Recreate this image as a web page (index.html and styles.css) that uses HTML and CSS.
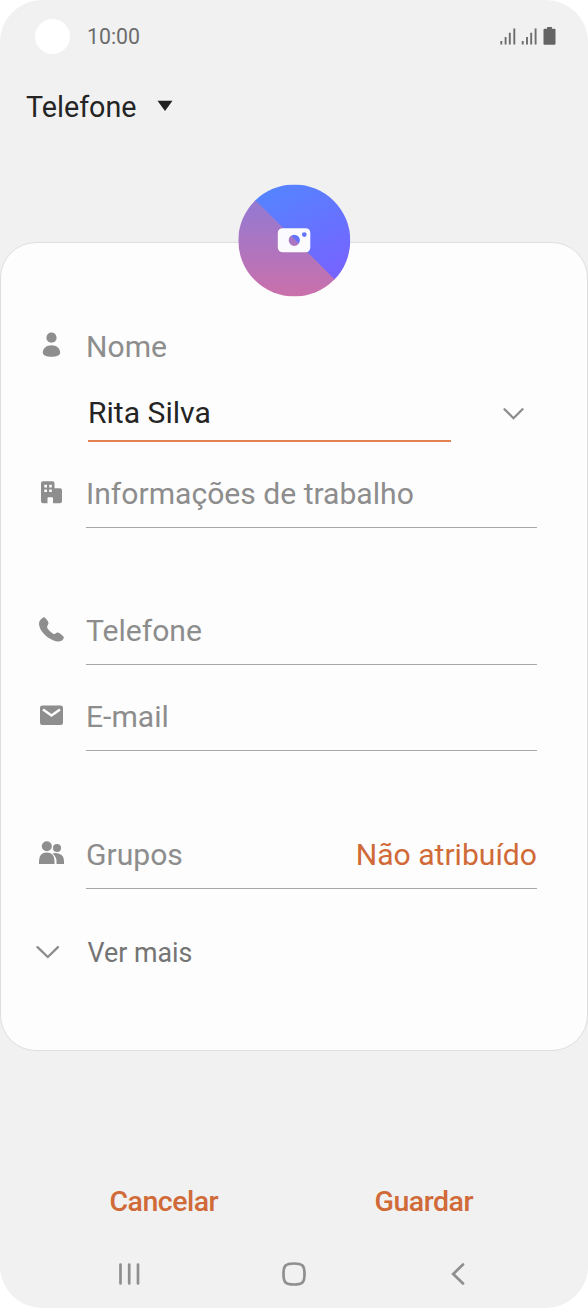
FILE: index.html
```html
<!DOCTYPE html>
<html lang="pt">
<head>
<meta charset="utf-8">
<title>Novo contacto</title>
<link rel="stylesheet" href="styles.css">
</head>
<body>
<main class="phone">
  <header class="status">
    <span class="lens"></span>
    <span class="clock">10:00</span>
    <svg class="signals" width="58" height="20" viewBox="0 0 58 20">
      <path d="M2.300 14v3.500M6.600 10v7.500M10.800 5.700v11.800M15.300 1.500v16M23.700 14v3.500M28 10v7.500M32.200 5.700v11.800M36.600 1.500v16" fill="none" stroke="#6d6d6d" stroke-width="1.900"/>
      <path d="M48.100 0h4.800v1.800h2.600q1 0 1 1v14q0 1-1 1h-10q-1 0-1-1v-14q0-1 1-1h2.600z" fill="#646464"/>
    </svg>
  </header>
  <div class="account">
    <span class="account-name">Telefone</span>
    <svg width="16" height="12" viewBox="0 0 16 12"><path d="M.5.700h15L8 11z" fill="#222"/></svg>
  </div>
  <section class="card">
    <div class="avatar">
      <svg width="112" height="112" viewBox="0 0 112 112">
        <defs>
          <linearGradient id="blue" x1=".2" y1="0" x2=".75" y2="1"><stop offset="0" stop-color="#5286ff"/><stop offset="1" stop-color="#7a60ff"/></linearGradient>
          <linearGradient id="pink" x1="0" y1="0" x2="0" y2="1"><stop offset=".1" stop-color="#8f7ad6"/><stop offset="1" stop-color="#ca70aa"/></linearGradient>
          <clipPath id="disc"><circle cx="56" cy="56" r="56"/></clipPath>
        </defs>
        <g clip-path="url(#disc)">
          <path d="M0 0h112v112z" fill="url(#blue)"/>
          <path d="M0-1.500L113.500 112H0z" fill="url(#pink)"/>
        </g>
        <path fill-rule="evenodd" fill="#fbfbff" d="M45 43.800h22q5 0 5 5v14q0 5-5 5H45q-5.500 0-5.500-5v-14q0-5 5.500-5zM56 50.200a5.600 5.600 0 1 0 0 11.200a5.600 5.600 0 1 0 0-11.200zM66 47.700a2.400 2.400 0 1 0 0 4.800a2.400 2.400 0 1 0 0-4.800z"/>
      </svg>
    </div>
    <div class="row name-row">
      <svg class="icon" width="28" height="28" viewBox="0 0 28 28"><circle cx="14.500" cy="6.700" r="5.100"/><path d="M5.800 21.500C5.800 17 10 14.200 14.500 14.200s8.700 2.800 8.700 7.300c0 3-4 4.300-8.700 4.300s-8.700-1.300-8.700-4.300z"/></svg>
      <div class="field plain"><span class="label">Nome</span></div>
    </div>
    <div class="entry">
      <div class="input"><span class="value">Rita Silva</span></div>
      <svg class="chevron" width="24" height="16" viewBox="0 0 24 16"><path d="M3.500 3.200l9 9 9-9"/></svg>
    </div>
    <div class="row work">
      <svg class="icon" width="28" height="28" viewBox="0 0 28 28"><path fill-rule="evenodd" d="M6 2.300h9.500q2 0 2 2v5h5.500q2 0 2 2v11q0 2-2 2h-7v-5q0-1-1-1h-3.500q-1 0-1 1v5H6q-2 0-2-2v-18q0-2 2-2zM7.300 5.800v2.700H10V5.800zM12.200 5.800v2.700h2.600V5.800zM7.300 10.400v2.700H10v-2.700zM12.200 10.400v2.700h2.600v-2.700z"/></svg>
      <div class="field"><span class="label">Informações de trabalho</span></div>
    </div>
    <div class="row phone-row">
      <svg class="icon" width="28" height="28" viewBox="0 0 28 28"><path d="M5.400 2Q7.300.4 8.800 2.500L11 5.600q1.200 2-.3 3.700-1.300 1.300-.1 3.100 2 3.200 5.100 5.100 1.500 1.200 2.800 0 1.800-1.800 3.800-.4l3.700 2.800q1.700 1.500.2 3.400c-2 2.600-6 3-10.100 1C8 21 3 14.400 2.100 9.100 1.600 6 2.900 3.700 5.400 2z"/></svg>
      <div class="field"><span class="label">Telefone</span></div>
    </div>
    <div class="row mail-row">
      <svg class="icon" width="28" height="28" viewBox="0 0 28 28"><rect x="3" y="3.500" width="23" height="19.500" rx="2.200"/><path d="M6 7.500l8.500 6L23 7.500" fill="none" stroke="#fdfdfd" stroke-width="2.500"/></svg>
      <div class="field"><span class="label">E-mail</span></div>
    </div>
    <div class="row groups-row">
      <svg class="icon" width="28" height="28" viewBox="0 0 28 28"><circle cx="9.800" cy="7.300" r="5"/><circle cx="20" cy="9" r="4"/><path d="M2 25v-3q0-8.500 7.800-8.500t7.700 8.500V25zM15.500 14.500q3.200-1 6.500.2 5 1.500 5 7.300V25h-7.500v-3q0-4-4-7.500z"/></svg>
      <div class="field"><span class="label">Grupos</span><span class="assigned">Não atribuído</span></div>
    </div>
    <div class="more">
      <svg class="chevron" width="26" height="16" viewBox="0 0 26 16"><path d="M2.500 2.100L12.800 12 23 2.100"/></svg>
      <span class="more-label">Ver mais</span>
    </div>
  </section>
  <div class="actions"><span class="action">Cancelar</span><span class="action">Guardar</span></div>
  <nav class="nav">
    <svg width="24" height="24" viewBox="0 0 24 24"><path d="M3.500 2.500v19M12.200 2.500v19M21 2.500v19"/></svg>
    <svg class="home" width="26" height="26" viewBox="0 0 26 26"><path d="M13 2.500c8.500 0 10.500 2 10.500 10.500s-2 10.500-10.500 10.500S2.500 21.500 2.500 13 4.500 2.500 13 2.500z"/></svg>
    <svg width="16" height="24" viewBox="0 0 16 24"><path d="M13 2.500L3.200 12l9.800 9.500"/></svg>
  </nav>
</main>
</body>
</html>
```
FILE: styles.css
```css
* { box-sizing: border-box; }
body { margin: 0; background: #fff; font-family: Roboto, sans-serif; }
svg { display: block; flex: none; }
span { white-space: nowrap; }
.phone { width: 588px; height: 1308px; overflow: hidden; border-radius: 42px; background: #f1f1f1; display: flex; flex-direction: column; }
.status { height: 73px; padding: 0 31px 0 35px; display: flex; align-items: center; }
.lens { width: 35px; height: 35px; border-radius: 50%; background: #fff; }
.clock { margin-left: 17px; font-size: 21.3px; color: #6c6c6c; }
.signals { margin-left: auto; }
.account { height: 68px; padding-left: 26px; display: flex; align-items: center; gap: 20px; color: #242424; }
.account svg { margin-bottom: 3px; }
.account-name { font-size: 28.7px; }
.card { margin-top: 101px; height: 809px; flex: none; border: 1px solid #dedede; border-radius: 36px; background: #fdfdfd; }
.avatar { width: 112px; height: 112px; margin: -59px auto 0; transform: translate(.3px, .5px); }
.row { display: grid; grid-template-columns: 49px 451px; height: 67px; padding-left: 36px; }
.icon { margin-top: 18px; fill: #8e8e8e; }
.field { padding-bottom: 2px; display: flex; align-items: center; justify-content: space-between; border-bottom: 1px solid #a8a8a8; color: #8d8d8d; font-size: 30.1px; }
.plain { border: 0; }
.name-row { height: 66px; margin-top: 18px; }
.name-row .icon { margin-top: 17px; }
.entry { height: 57px; margin-top: 5px; padding-left: 87px; display: flex; align-items: center; }
.input { width: 363px; height: 57px; display: flex; align-items: center; border-bottom: 2px solid #e48052; }
.value { font-size: 30.1px; color: #242424; }
.entry .chevron { margin-left: 50px; }
.chevron { fill: none; stroke: #8c8c8c; stroke-width: 2.3; stroke-linecap: round; }
.work { margin-top: 19px; }
.phone-row { margin-top: 70px; }
.mail-row { margin-top: 19px; }
.groups-row { margin-top: 71px; }
.groups-row .icon { margin-top: 17px; }
.assigned { color: #d06a38; }
.more { height: 60px; margin-top: 34px; padding-left: 34px; display: flex; align-items: center; }
.more-label { margin-left: 26.5px; font-size: 26.8px; color: #747474; }
.actions { height: 60px; margin-top: 120px; padding: 0 115px 0 109.5px; display: flex; align-items: center; justify-content: space-between; }
.action { font-size: 28.5px; font-weight: 500; letter-spacing: -0.5px; color: #d06a38; }
.nav { height: 26px; margin-top: 30px; padding: 0 122px 0 117px; display: grid; grid-template-columns: 163.5px 1fr auto; align-items: center; fill: none; stroke: #8f8f8f; stroke-width: 2.7; stroke-linecap: round; }
```
